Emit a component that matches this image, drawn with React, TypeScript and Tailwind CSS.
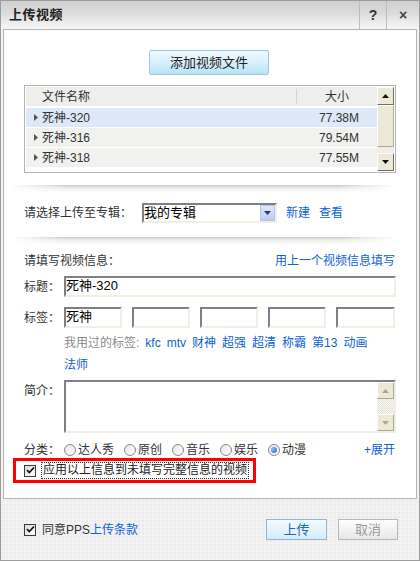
import React from "react";

const font = { fontFamily: '"Liberation Sans", "Noto Sans CJK SC", sans-serif' };

function Sep() {
  return (
    <div className="ml-[6px] mr-[20px] h-[8px] bg-[linear-gradient(to_bottom,#c4c4c4_0px,#d8d8d8_1px,#ececec_3px,#f8f8f8_6px,#ffffff_8px)] [mask-image:linear-gradient(to_right,transparent,black_15%,black_85%,transparent)]" />
  );
}

function Input({ className = "", value = "" }: { className?: string; value?: string }) {
  return (
    <div
      className={
        "h-[21px] border-2 border-t-[#808080] border-l-[#808080] border-b-[#f1efe2] border-r-[#f1efe2] bg-white text-[13px] leading-[16px] text-black whitespace-nowrap " +
        className
      }
    >
      {value}
    </div>
  );
}

function Radio({ label, checked = false }: { label: string; checked?: boolean }) {
  return (
    <div className="flex items-center gap-[2px] whitespace-nowrap">
      <div className="w-[12px] h-[12px] rounded-full border border-[#8a8a8a] bg-[linear-gradient(135deg,#e6e6e6,#ffffff)] flex items-center justify-center">
        {checked && <div className="w-[6px] h-[6px] rounded-full bg-[radial-gradient(circle_at_35%_35%,#8fc0ff,#1a5fd0)]" />}
      </div>
      <span>{label}</span>
    </div>
  );
}

function Check() {
  return (
    <div className="w-[12px] h-[12px] shrink-0 border border-[#3a3a3a] bg-[linear-gradient(135deg,#dcdcd4,#ffffff)] flex items-center justify-center">
      <svg width="9" height="9" viewBox="0 0 9 9">
        <path d="M1 4 L3.3 6.5 L8 1.5" stroke="#111" strokeWidth="1.8" fill="none" />
      </svg>
    </div>
  );
}

function ScrollBtn({ up }: { up: boolean }) {
  return (
    <div className="w-[17px] h-[18px] bg-[#ece9d8] border border-t-[#ffffff] border-l-[#ffffff] border-b-[#716f64] border-r-[#716f64] flex items-center justify-center">
      <svg width="7" height="4" viewBox="0 0 7 4">
        {up ? <path d="M0 4 L3.5 0 L7 4 Z" fill="#111" /> : <path d="M0 0 L3.5 4 L7 0 Z" fill="#111" />}
      </svg>
    </div>
  );
}

function Row({ name, size, sel = false }: { name: string; size: string; sel?: boolean }) {
  return (
    <div
      className={
        "h-[20px] flex items-center border-b border-white text-[12px] text-[#333] " +
        (sel ? "bg-[#dde9f9]" : "bg-[#f1f1ef]")
      }
    >
      <svg className="ml-[8px]" width="4" height="7" viewBox="0 0 4 7"><path d="M0 0 L4 3.5 L0 7 Z" fill="#555" /></svg>
      <span className="ml-[4px] flex-1">{name}</span>
      <span className="w-[75px] text-left pl-[17px]">{size}</span>
    </div>
  );
}

export default function App() {
  const tags = ["kfc", "mtv", "财神", "超强", "超清", "称霸", "第13", "动画"];
  return (
    <div style={font} className="w-[420px] h-[561px] bg-[#f3f3f3] border border-[#9c9c9c] flex flex-col text-[12px] text-[#333] overflow-hidden">
      {/* title bar */}
      <div className="h-[28px] flex items-stretch bg-[linear-gradient(to_bottom,#cfcfcf_0%,#dadada_40%,#eeeeee_80%,#f6f6f6_100%)]">
        <div className="flex-1 pl-[8px] flex items-center text-[13px] font-bold text-[#222] tracking-[0.5px]">上传视频</div>
        <div className="w-[1px] bg-[#f8f8f8] border-l border-[#bdbdbd]" />
        <div className="w-[26px] flex items-center justify-center font-bold text-[14px] text-[#333]">?</div>
        <div className="w-[1px] bg-[#f8f8f8] border-l border-[#bdbdbd]" />
        <div className="w-[32px] flex items-center justify-center text-[14px] font-bold text-[#444]">×</div>
      </div>

      {/* white panel */}
      <div className="mx-[2px] h-[470px] bg-white border border-[#b6b6b6] flex flex-col">
        <div className="mt-[20px] flex justify-center">
          <div className="ml-[-2px] w-[120px] h-[25px] border border-[#9cc8e4] rounded-[2px] bg-[linear-gradient(to_bottom,#f0faff,#d8f0fc_50%,#b8e2f8)] flex items-center justify-center text-[13px] text-[#222]">
            添加视频文件
          </div>
        </div>

        {/* list */}
        <div className="mt-[10px] ml-[20px] w-[372px] h-[88px] border border-[#b4b4b4] flex p-[1px]">
          <div className="flex-1 flex flex-col">
            <div className="h-[21px] flex items-center bg-[#eeeeec] border-b-[2px] border-white text-[12px] text-[#333]">
              <span className="ml-[16px] flex-1">文件名称</span>
              <span className="w-[1px] h-[15px] bg-[#d4d4d4]" />
              <span className="w-[80px] text-center">大小</span>
            </div>
            <Row name="死神-320" size="77.38M" sel />
            <Row name="死神-316" size="79.54M" />
            <Row name="死神-318" size="77.55M" />
          </div>
          <div className="w-[17px] flex flex-col bg-[#f4f2ea]">
            <ScrollBtn up />
            <div className="h-[42px] bg-[#ece9d8] border border-t-[#ffffff] border-l-[#ffffff] border-b-[#aca899] border-r-[#aca899]" />
            <div className="flex-1 bg-[repeating-conic-gradient(#f6f4ee_0_25%,#e8e6dc_0_50%)] bg-[length:2px_2px]" />
            <ScrollBtn up={false} />
          </div>
        </div>

        <div className="mt-[12px]"><Sep /></div>

        {/* album row */}
        <div className="mt-[10px] pl-[20px] flex items-center h-[20px] text-[12px] whitespace-nowrap">
          <span className="w-[118px]">请选择上传至专辑：</span>
          <div className="w-[135px] h-[20px] border-2 border-t-[#808080] border-l-[#808080] border-b-[#f1efe2] border-r-[#f1efe2] flex bg-white">
            <span className="flex-1 text-[13px] leading-[16px] text-black">我的专辑</span>
            <div className="w-[15px] h-[16px] bg-[linear-gradient(to_bottom,#dfe8fb,#bccdf3)] border border-[#b4c4ea] flex items-center justify-center">
              <svg width="7" height="4" viewBox="0 0 7 4"><path d="M0 0 L3.5 4 L7 0 Z" fill="#2a3a6a" /></svg>
            </div>
          </div>
          <span className="ml-[9px] text-[#0d62d4]">新建</span>
          <span className="ml-[9px] text-[#0d62d4]">查看</span>
        </div>

        <div className="mt-[14px]"><Sep /></div>

        <div className="mt-[8px] pl-[20px] pr-[21px] h-[16px] flex items-center justify-between text-[12px] whitespace-nowrap">
          <span>请填写视频信息：</span>
          <span className="text-[#0d62d4]">用上一个视频信息填写</span>
        </div>

        <div className="mt-[7px] pl-[20px] flex items-center text-[12px] whitespace-nowrap">
          <span className="w-[40px]">标题：</span>
          <Input className="w-[332px]" value="死神-320" />
        </div>

        <div className="mt-[10px] pl-[20px] flex items-center text-[12px] whitespace-nowrap">
          <span className="w-[40px]">标签：</span>
          <div className="flex gap-[10px]">
            <Input className="w-[58px]" value="死神" />
            <Input className="w-[58px]" />
            <Input className="w-[58px]" />
            <Input className="w-[58px]" />
            <Input className="w-[59px]" />
          </div>
        </div>

        <div className="mt-[4px] pl-[60px] text-[12px] leading-[22px] whitespace-nowrap">
          <div className="flex gap-[6px]">
            <span className="text-[#8a8a8a]">我用过的标签:</span>
            {tags.map((t) => (
              <span key={t} className="text-[#0d62d4]">{t}</span>
            ))}
          </div>
          <div className="text-[#0d62d4]">法师</div>
        </div>

        <div className="mt-[4px] pl-[20px] flex items-start text-[12px] whitespace-nowrap">
          <span className="w-[40px] mt-[2px]">简介：</span>
          <div className="w-[332px] h-[53px] border-2 border-t-[#808080] border-l-[#808080] border-b-[#f1efe2] border-r-[#f1efe2] bg-white flex justify-end">
            <div className="w-[17px] flex flex-col">
              <div className="w-[17px] h-[17px] bg-[#ece9d8] border border-t-[#ffffff] border-l-[#ffffff] border-b-[#aca899] border-r-[#aca899] flex items-center justify-center">
                <svg width="7" height="4" viewBox="0 0 7 4"><path d="M0 4 L3.5 0 L7 4 Z" fill="#a8a697" /></svg>
              </div>
              <div className="flex-1 bg-[repeating-conic-gradient(#f6f4ee_0_25%,#e8e6dc_0_50%)] bg-[length:2px_2px]" />
              <div className="w-[17px] h-[17px] bg-[#ece9d8] border border-t-[#ffffff] border-l-[#ffffff] border-b-[#aca899] border-r-[#aca899] flex items-center justify-center">
                <svg width="7" height="4" viewBox="0 0 7 4"><path d="M0 0 L3.5 4 L7 0 Z" fill="#a8a697" /></svg>
              </div>
            </div>
          </div>
        </div>

        <div className="mt-[9px] pl-[20px] pr-[21px] h-[16px] flex items-center text-[12px] whitespace-nowrap">
          <span className="w-[40px]">分类：</span>
          <div className="flex-1 flex items-center gap-[10px]">
            <Radio label="达人秀" />
            <Radio label="原创" />
            <Radio label="音乐" />
            <Radio label="娱乐" />
            <Radio label="动漫" checked />
          </div>
          <span className="text-[#0d62d4]">+展开</span>
        </div>

        <div className="ml-[9px] w-[243px] h-[25px] border-[3px] border-[#ff0000] flex items-center pl-[8px] gap-[5px] text-[12px] whitespace-nowrap">
          <Check />
          <span className="border border-dotted border-[#333] leading-[15px] px-[1px] text-[#222]">应用以上信息到未填写完整信息的视频</span>
        </div>
      </div>

      {/* footer */}
      <div className="flex-1 bg-[#f2f2f2] bg-[radial-gradient(#dedede_0.6px,transparent_0.8px)] bg-[length:4px_4px] flex items-center pl-[23px] pr-[21px] text-[12px] whitespace-nowrap">
        <Check />
        <span className="ml-[6px] text-[#333]">同意PPS</span>
        <span className="text-[#0d62d4]">上传条款</span>
        <div className="flex-1" />
        <div className="w-[61px] h-[21px] border border-[#8cb8dc] bg-[linear-gradient(to_bottom,#f4fbff,#d6ecfa)] flex items-center justify-center text-[13px] text-[#1a6ab4]">上传</div>
        <div className="ml-[11px] w-[60px] h-[21px] border border-[#b8b8b8] bg-[linear-gradient(to_bottom,#ffffff,#e6e6e6)] flex items-center justify-center text-[13px] text-[#9a9a9a]">取消</div>
      </div>
    </div>
  );
}
